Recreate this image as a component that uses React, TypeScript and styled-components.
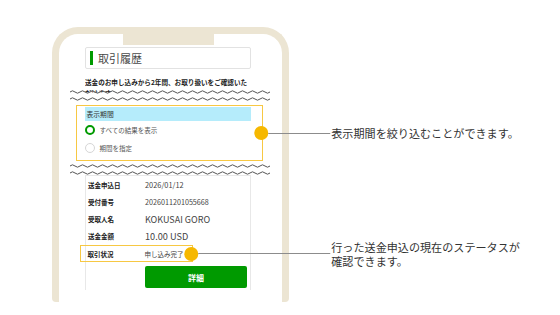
import type { FC, ReactNode } from "react";
import styled, { createGlobalStyle } from "styled-components";

const FRAME = "#ece5d3";
const YELLOW = "#f7c843";
const DOT = "#f6b800";
const GREEN = "#009a00";

const GlobalStyle = createGlobalStyle`
  html, body {
    margin: 0;
    padding: 0;
    background: #ffffff;
  }
  body {
    font-family: "Noto Sans CJK JP", "Noto Sans", sans-serif;
    color: #333333;
  }
`;

const Page = styled.div`
  width: 560px;
  height: 315px;
  overflow: hidden;
  padding: 27px 0 0 52px;
  box-sizing: border-box;
`;

const Phone = styled.div`
  position: relative;
  width: 237px;
  height: 275px;
  box-sizing: border-box;
  border: 7px solid ${FRAME};
  border-bottom: 0;
  border-radius: 26px 26px 4px 4px;
  padding: 13px 0 0 26px;

  &::before {
    content: "";
    position: absolute;
    top: -7px;
    left: 64px;
    width: 91px;
    height: 18px;
    background: ${FRAME};
  }
`;

const Column = styled.div`
  width: 166px;
  display: flex;
  flex-direction: column;
`;

const TitleBox = styled.div`
  height: 22px;
  box-sizing: border-box;
  border: 1px solid #e2e2e2;
  border-radius: 2px;
  display: flex;
  align-items: center;
  gap: 5px;
  padding-left: 4px;
  font-size: 11px;
  color: #4a4a4a;
`;

const TitleBar = styled.span`
  width: 3px;
  height: 14px;
  background: ${GREEN};
`;

const Description = styled.p`
  margin: 8px 0 0;
  height: 18px;
  overflow: hidden;
  font-size: 6.6px;
  font-weight: 700;
  line-height: 10.5px;
  color: #222222;
`;

const WaveSvg = styled.svg<{ $top: number }>`
  display: block;
  margin: ${(p) => p.$top}px 0 0 -15px;
`;

const wavePath = (y: number, count: number, period: number, amp: number): string => {
  let d = `M0 ${y}`;
  for (let i = 0; i < count; i++) {
    d += ` q${period / 4} ${-amp} ${period / 2} 0 q${period / 4} ${amp} ${period / 2} 0`;
  }
  return d;
};

const Break: FC<{ top: number }> = ({ top }) => (
  <WaveSvg $top={top} width="200" height="12" viewBox="0 0 200 12">
    <rect x="0" y="3.5" width="200" height="6.5" fill="#ffffff" />
    <path d={wavePath(3, 20, 10, 2.4)} fill="none" stroke="#555555" strokeWidth="1" />
    <path d={wavePath(10, 20, 10, 2.4)} fill="none" stroke="#555555" strokeWidth="1" />
  </WaveSvg>
);

const PeriodBox = styled.div`
  position: relative;
  margin: 4px 0 0 -9px;
  width: 187px;
  height: 56px;
  box-sizing: border-box;
  border: 1.5px solid ${YELLOW};
  padding: 1px 0 0 7.5px;
`;

const PeriodHeader = styled.div`
  width: 166px;
  height: 14px;
  background: #b5ecfb;
  display: flex;
  align-items: center;
  padding-left: 2px;
  box-sizing: border-box;
  font-size: 6.8px;
  color: #333333;
`;

const RadioRow = styled.label`
  height: 18px;
  display: flex;
  align-items: center;
  gap: 5px;
  font-size: 6.5px;
  color: #555555;
`;

const RadioMark = styled.span<{ $checked?: boolean }>`
  width: 10px;
  height: 10px;
  box-sizing: border-box;
  border-radius: 50%;
  background: #ffffff;
  border: ${(p) => (p.$checked ? `2.6px solid ${GREEN}` : "1px solid #d6d6d6")};
`;

const Card = styled.div`
  width: 166px;
  box-sizing: border-box;
  border: 1px solid #e8e8e8;
  border-bottom: 0;
  padding-bottom: 2px;
  display: flex;
  flex-direction: column;
`;

const Row = styled.div`
  height: 17.25px;
  display: flex;
  align-items: center;
  padding-left: 2px;
`;

const HighlightRow = styled(Row)`
  position: relative;
  margin-left: -6px;
  width: 113px;
  box-sizing: border-box;
  border: 1.5px solid ${YELLOW};
  padding-left: 6.5px;
`;

const Label = styled.span`
  width: 57px;
  flex: none;
  font-size: 6.5px;
  font-weight: 700;
  color: #222222;
`;

const Value = styled.span<{ $size: number }>`
  font-size: ${(p) => p.$size}px;
  color: #444444;
  white-space: nowrap;
`;

const DetailButton = styled.button`
  margin: 4px 0 0 59px;
  width: 102px;
  height: 22px;
  border: 0;
  border-radius: 2px;
  background: ${GREEN};
  color: #ffffff;
  font-family: inherit;
  font-size: 8px;
  font-weight: 700;
  padding: 0;
`;

const CalloutWrap = styled.div`
  position: absolute;
  left: 100%;
  top: 50%;
  transform: translate(-7.75px, -50%);
  display: flex;
  align-items: center;
`;

const Dot = styled.span`
  width: 14px;
  height: 14px;
  border-radius: 50%;
  background: ${DOT};
  flex: none;
`;

const Leader = styled.span<{ $length: number }>`
  width: ${(p) => p.$length}px;
  height: 1px;
  background: #8c8c8c;
  flex: none;
`;

const CalloutText = styled.div`
  margin-left: 1px;
  font-size: 11.1px;
  line-height: 14px;
  color: #333333;
  white-space: nowrap;
`;

const Callout: FC<{ length: number; children: ReactNode }> = ({ length, children }) => (
  <CalloutWrap>
    <Dot />
    <Leader $length={length} />
    <CalloutText>{children}</CalloutText>
  </CalloutWrap>
);

const rows = [
  { label: "送金申込日", value: "2026/01/12", size: 7.4 },
  { label: "受付番号", value: "2026011201055668", size: 7.2 },
  { label: "受取人名", value: "KOKUSAI GORO", size: 9 },
  { label: "送金金額", value: "10.00 USD", size: 9.2 },
];

export default function App() {
  return (
    <>
      <GlobalStyle />
      <Page>
        <Phone>
          <Column>
            <TitleBox>
              <TitleBar />
              取引履歴
            </TitleBox>
            <Description>
              送金のお申し込みから2年間、お取り扱いをご確認いた
              <br />
              だけます
            </Description>
            <Break top={-6} />
            <PeriodBox>
              <PeriodHeader>表示期間</PeriodHeader>
              <RadioRow>
                <RadioMark $checked />
                すべての結果を表示
              </RadioRow>
              <RadioRow>
                <RadioMark />
                期間を指定
              </RadioRow>
              <Callout length={62}>表示期間を絞り込むことができます。</Callout>
            </PeriodBox>
            <Break top={2} />
            <Card>
              {rows.map((row) => (
                <Row key={row.label}>
                  <Label>{row.label}</Label>
                  <Value $size={row.size}>{row.value}</Value>
                </Row>
              ))}
              <HighlightRow>
                <Label>取引状況</Label>
                <Value $size={6.5}>申し込み完了</Value>
                <Callout length={132}>
                  行った送金申込の現在のステータスが
                  <br />
                  確認できます。
                </Callout>
              </HighlightRow>
              <DetailButton>詳細</DetailButton>
            </Card>
          </Column>
        </Phone>
      </Page>
    </>
  );
}
